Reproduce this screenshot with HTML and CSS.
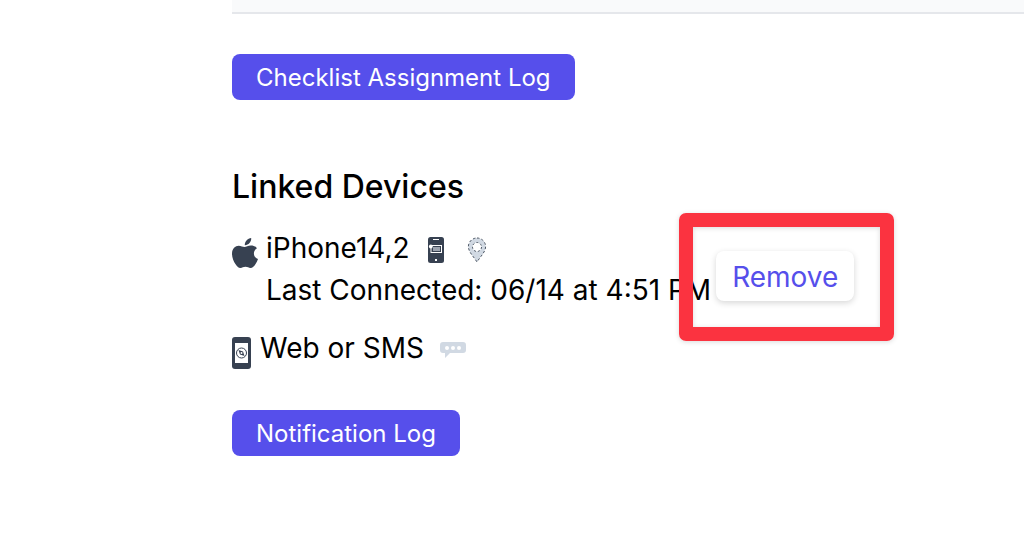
FILE: index.html
```
<!DOCTYPE html>
<html lang="en">
<head>
    <meta charset="UTF-8">
    <title>Linked Devices</title>
    <link rel="stylesheet" href="styles.css">
</head>
<body>
<div id="container">
    <div class="table-end"></div>
    <button type="button" class="btn">Checklist Assignment Log</button>

    <h2>Linked Devices</h2>
    <ul class="devices">
        <li class="phone">
            <svg class="apple" viewBox="0 0 26 30" fill="#374151">
                <path d="M19.2 0c.2 1.9-.6 3.700-1.700 5-1.200 1.400-3 2.300-4.700 2.200-.2-1.800.6-3.600 1.700-4.800C15.700 1 17.600.1 19.200 0z"/>
                <path d="M25 10.200c-1.900 1.200-3.100 2.900-3.100 5.200 0 2.700 1.600 4.700 4.100 5.700-.6 1.800-1.500 3.500-2.600 5.100-1.300 1.900-2.700 3.800-4.900 3.800-2 0-2.700-1.200-5-1.200-2.300 0-3.100 1.200-5 1.200-2.200 0-3.700-2-5.100-4C1.600 23.500 0 19.600 0 15.700 0 10.600 3.300 7.800 6.700 7.800c2.300 0 4.100 1.300 5.800 1.300 1.500 0 3.700-1.500 6.400-1.500 2.500 0 4.700.8 6.100 2.600z"/>
            </svg>
            <div class="info">
                <div class="name">
                    <span>iPhone14,2</span>
                    <svg class="mobile" viewBox="0 0 16 26">
                        <rect width="16" height="26" rx="2.500" fill="#374151"/>
                        <path d="M5 2.500h6" stroke="#fff" stroke-width="1"/>
                        <rect x="7" y="22" width="2" height="2" fill="#fff"/>
                        <rect x="3" y="8.500" width="10.500" height="7" fill="#374151" stroke="#fff"/>
                        <rect x="5" y="10" width="7" height="4" fill="#9ca3af"/>
                        <circle cx="2.800" cy="9.500" r="1.900" fill="#fff"/>
                    </svg>
                    <svg class="pin" viewBox="0 0 20 26">
                        <path fill="#d1d9e3" fill-rule="evenodd" d="M10 1a8.600 8.600 0 0 1 8.600 8.800c0 5-5.100 9.600-8.600 15.200C6.500 19.400 1.400 14.800 1.400 9.800A8.600 8.600 0 0 1 10 1zm0 4.500a4.500 4.500 0 1 0 0 9 4.500 4.500 0 0 0 0-9z"/>
                        <path fill="none" stroke="#4b5563" stroke-width="1" stroke-dasharray="2.500 2" d="M10 1a8.600 8.600 0 0 1 8.600 8.800c0 5-5.100 9.600-8.600 15.200C6.500 19.400 1.400 14.800 1.400 9.800A8.600 8.600 0 0 1 10 1z"/>
                        <circle cx="10" cy="10" r="4.500" fill="none" stroke="#4b5563" stroke-dasharray="2 2"/>
                    </svg>
                </div>
                <div>Last Connected: 06/14 at 4:51 PM</div>
            </div>
            <div class="action">
                <button type="button" class="remove">Remove</button>
                <div class="highlight"></div>
            </div>
        </li>
        <li class="web">
            <svg class="browser" viewBox="0 0 19 32">
                <rect width="19" height="32" rx="3" fill="#374151"/>
                <rect x="3" y="6" width="13" height="20" fill="#fff"/>
                <circle cx="9.500" cy="16" r="5" fill="none" stroke="#374151" stroke-width="1"/>
                <path d="M6.500 13l4.500 1.500 1.500 4.500-4.500-1.500z" fill="#374151"/>
                <circle cx="9.500" cy="16" r="1" fill="#fff"/>
            </svg>
            <span>Web or SMS</span>
            <svg class="sms" viewBox="0 0 26 16">
                <path fill="#d1d9e3" d="M3 0h20a3 3 0 0 1 3 3v5a3 3 0 0 1-3 3H10l-5 5v-5H3a3 3 0 0 1-3-3V3a3 3 0 0 1 3-3z"/>
                <circle cx="7" cy="6" r="2" fill="#fff"/>
                <circle cx="13" cy="6" r="2" fill="#fff"/>
                <circle cx="19" cy="6" r="2" fill="#fff"/>
            </svg>
        </li>
    </ul>
    <button type="button" class="btn">Notification Log</button>
</div>
</body>
</html>
```

FILE: styles.css
```
*{
    margin: 0;
    padding: 0;
    box-sizing: border-box;
}
body{
    background: #fff;
    color: #000;
    font-family: Inter, "Liberation Sans", sans-serif;
    font-size: 28px;
    line-height: 42px;
}
ul{
    list-style: none;
}
svg{
    display: block;
    flex: none;
}
button{
    border: 0;
    font-family: inherit;
    cursor: pointer;
}
#container{
    padding-left: 232px;
}
.table-end{
    height: 14px;
    margin-bottom: 40px;
    background: #f9fafb;
    border-bottom: 2px solid #e5e7eb;
}
.btn{
    display: block;
    padding: 9px 24px 7px;
    background: #564feb;
    color: #fff;
    font-size: 24px;
    line-height: 30px;
    border-radius: 8px;
}

h2{
    margin: 66px 0 19px;
    font-size: 32px;
    font-weight: 500;
    line-height: 42px;
}
.devices{
    margin-bottom: 41px;
}
.phone{
    display: flex;
    align-items: flex-start;
    margin-bottom: 16px;
}
.apple{
    width: 26px;
    height: 30px;
    margin: 11px 8px 0 0;
}
.info{
    white-space: nowrap;
}
.name{
    display: flex;
    align-items: flex-start;
}
.mobile{
    width: 16px;
    height: 26px;
    margin: 10px 23px 0 18px;
}
.pin{
    width: 20px;
    height: 26px;
    margin-top: 10px;
}

.action{
    position: relative;
    margin: 24px 0 0 5px;
}
.remove{
    display: block;
    padding: 5px 16px 3px;
    background: #fff;
    color: #564feb;
    font-size: 28px;
    line-height: 42px;
    border-radius: 8px;
    box-shadow: 0 2px 6px rgba(0,0,0,.16);
}
/* red frame round the button */
.highlight{
    position: absolute;
    top: -38px;
    right: -40px;
    bottom: -40px;
    left: -37px;
    border: 14px solid #fb3340;
    border-radius: 7px;
    box-shadow: 0 1px 5px rgba(0,0,0,.15), inset 0 1px 5px rgba(0,0,0,.15);
    pointer-events: none;
}

.web{
    display: flex;
    align-items: flex-start;
}
.browser{
    width: 19px;
    height: 32px;
    margin: 10px 9px 0 0;
}
.sms{
    width: 26px;
    height: 16px;
    margin: 15px 0 0 16px;
}
```
